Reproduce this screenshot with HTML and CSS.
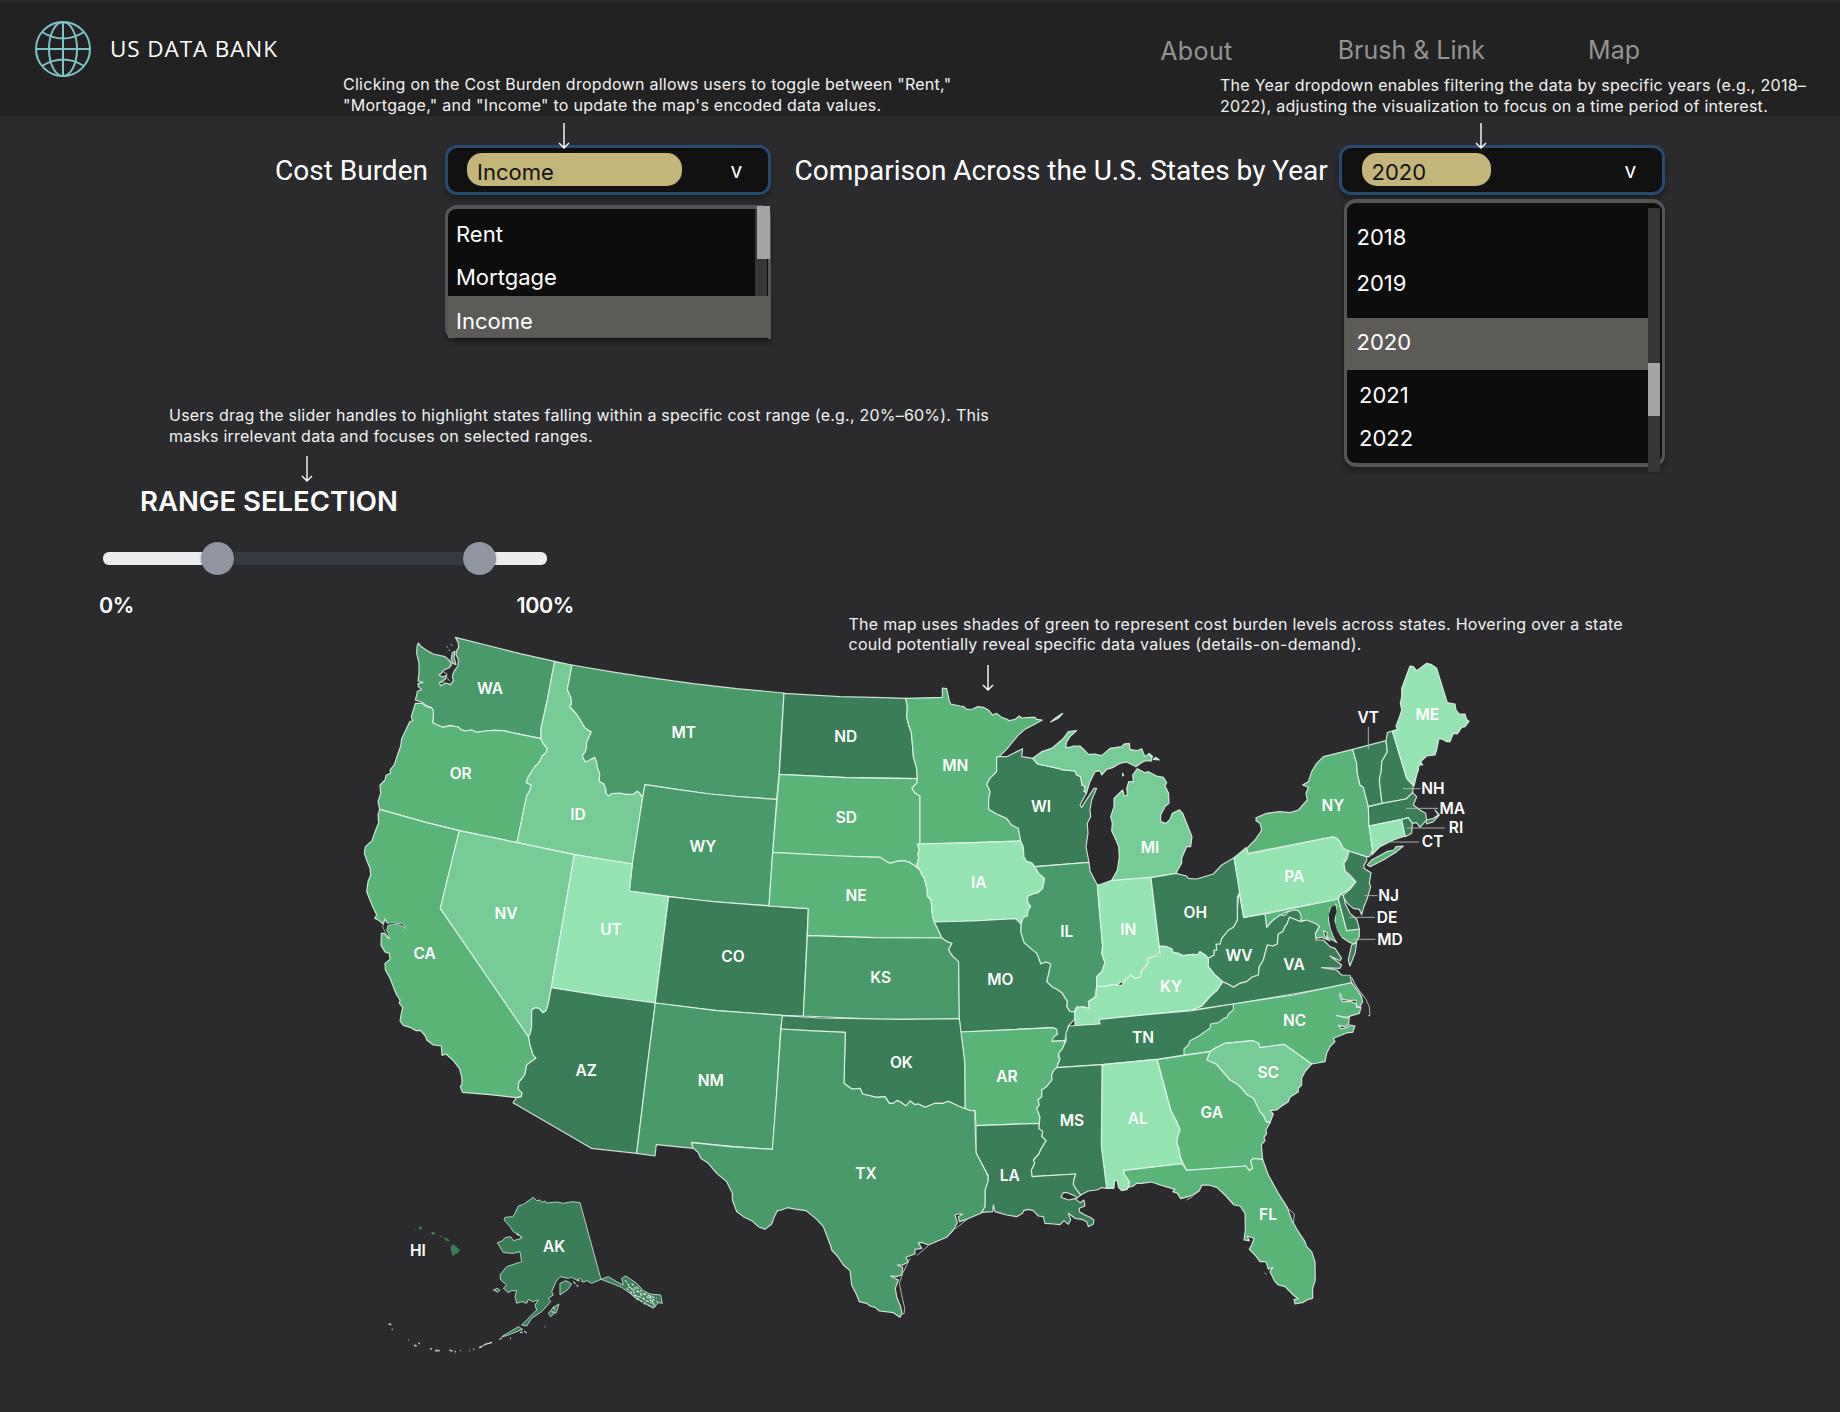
FILE: index.html
```html
<!DOCTYPE html>
<html lang="en">
<head>
<meta charset="utf-8">
<title>US Data Bank</title>
<link rel="stylesheet" href="styles.css">
</head>
<body>
<div class="page">
<header class="topbar">
  <div class="brand">
    <svg class="globe" viewBox="0 0 56 56"><circle cx="28" cy="28" r="27"/><ellipse cx="28" cy="28" rx="14" ry="27"/><path d="M28 1V55M1 28H55M7 11Q28 24 49 11M7 45Q28 32 49 45"/></svg>
    <span class="brand-name">US DATA BANK</span>
  </div>
  <nav class="nav"><a class="nav-about">About</a><a class="nav-brush">Brush &amp; Link</a><a>Map</a></nav>
</header>
<main>
  <section class="controls">
    <span class="label label-cost">Cost Burden</span>
    <div class="select">
      <span class="pill pill-wide">Income</span><span class="caret">v</span>
      <div class="menu menu-cost">
        <div class="opt opt-rent">Rent</div><div class="opt opt-mort">Mortgage</div><div class="opt opt-inc">Income</div>
        <div class="track"></div><div class="thumb"></div>
      </div>
    </div>
    <span class="label label-year">Comparison Across the U.S. States by Year</span>
    <div class="select">
      <span class="pill pill-year">2020</span><span class="caret">v</span>
      <div class="menu menu-year">
        <div class="opt y18">2018</div><div class="opt y19">2019</div><div class="opt y20">2020</div><div class="opt y21">2021</div><div class="opt y22">2022</div>
        <div class="track"></div><div class="thumb"></div>
      </div>
    </div>
  </section>
  <section class="range">
    <p class="note note-range">Users drag the slider handles to highlight states falling within a specific cost range (e.g., 20%–60%). This<br>masks irrelevant data and focuses on selected ranges.</p>
    <svg class="arrow arrow-range" viewBox="0 0 14 26"><path d="M7 0V25M2 20L7 25L12 20"/></svg>
    <h2>RANGE SELECTION</h2>
    <div class="slider"><i class="knob knob-low"></i><i class="knob knob-high"></i></div>
    <div class="limits"><span>0%</span><span>100%</span></div>
  </section>
</main>
<aside class="note note-cost">Clicking on the Cost Burden dropdown allows users to toggle between "Rent,"<br>"Mortgage," and "Income" to update the map's encoded data values.</aside>
<svg class="arrow arrow-cost" viewBox="0 0 14 26"><path d="M7 0V25M2 20L7 25L12 20"/></svg>
<aside class="note note-year">The Year dropdown enables filtering the data by specific years (e.g., 2018–<br>2022), adjusting the visualization to focus on a time period of interest.</aside>
<svg class="arrow arrow-year" viewBox="0 0 14 26"><path d="M7 0V25M2 20L7 25L12 20"/></svg>
<aside class="note note-map">The map uses shades of green to represent cost burden levels across states. Hovering over a state<br>could potentially reveal specific data values (details-on-demand).</aside>
<svg class="arrow arrow-map" viewBox="0 0 14 26"><path d="M7 0V25M2 20L7 25L12 20"/></svg>
<svg class="map" viewBox="340 620 1160 760">
  <g class="states" transform="translate(350 620) scale(.33333)">
    <path class="c2" d="M205 69L214 80 232 92 250 102 285 110 297 120 303 130 298 143 282 150 276 158 267 165 278 171 290 167 286 178 268 188 272 197 288 189 302 194 310 182 307 168 313 152 324 138 325 118 318 104 320 92 326 82 325 70 316 52 420 78 510 101 614 124 606 165 592 240 573 325 573 356 500 341 460 332 430 331 405 333 380 337 365 330 345 333 333 329 325 321 300 317 288 320 278 322 262 315 248 308 250 288 250 272 240 262 228 256 215 246 196 240 200 226 202 214 215 209 205 200 204 191 219 187 204 183 207 160 207 130 200 100 201 80Z"/>
    <path class="c2" d="M307 98L315 94 312 112 318 134 308 130 304 115Z"/><path class="isle" d="M289 79l5 4M302 73l6 3M296 90l5 2"/>
    <path class="isle" d="M280 155l12 8-8 6M290 172l10 12M272 188l12-2M300 120l6 12-4 10"/>
    <path class="c3" d="M196 250L215 250 232 262 244 262 250 272 250 288 248 308 262 315 278 322 288 320 300 317 325 321 333 329 345 333 365 330 380 337 405 333 430 331 460 332 500 341 573 356 580 372 592 386 588 398 577 408 566 430 556 438 548 450 534 472 529 488 544 495 540 510 530 528 501 668 328 632 230 608 89 568 84 545 92 520 90 495 105 480 108 466 122 460 120 450 133 434 140 412 152 378 155 356 170 325 180 304 188 303 184 290 190 270Z"/>
    <path class="c4" d="M614 124L666 135 652 208 664 238 664 254 658 258 682 285 704 322 714 330 724 335 709 370 710 382 706 395 697 408 706 426 718 420 734 412 740 426 742 440 749 462 748 484 762 492 768 508 768 520 776 528 784 521 810 519 830 523 850 523 862 513 868 518 878 533 847 732 673 704 501 668 530 528 540 510 544 495 529 488 534 472 548 450 556 438 566 430 577 408 588 398 592 386 580 372 573 356 573 325 592 240 606 165Z"/>
    <path class="c2" d="M666 135L800 158 900 173 1030 191 1160 206 1302 219 1294 340 1287 463 1280 538 1180 531 1080 522 980 508 885 494 878 533 868 518 862 513 850 523 830 523 810 519 784 521 776 528 768 520 768 508 762 492 748 484 749 462 742 440 740 426 734 412 718 420 706 426 697 408 706 395 710 382 709 370 724 335 714 330 704 322 682 285 658 258 664 254 664 238 652 208Z"/>
    <path class="c2" d="M885 494L980 508 1080 522 1180 531 1280 538 1268 700 1257 857 1050 842 838 813 847 732 878 533Z"/>
  </g>
  <g class="states" transform="translate(350 800) scale(.33333)">
    <path class="c3" d="M89 28L230 68 328 92 271 325 536 711 540 735 545 750 548 762 558 775 540 787 530 795 527 812 524 825 516 835 506 848 505 868 516 878 514 890 500 893 420 884 337 877 331 860 336 852 335 830 328 805 310 782 288 762 276 766 274 738 250 735 230 720 226 708 212 692 198 692 180 682 160 676 150 663 153 645 158 622 148 610 150 600 140 585 132 566 120 535 106 510 105 490 120 478 118 460 105 456 93 436 94 400 103 400 116 416 109 392 107 378 112 370 105 357 99 372 88 362 74 355 80 345 66 315 50 275 54 245 62 225 60 205 51 183 43 160 46 140 66 122 75 95 86 68 84 45Z"/>
    <path class="water" d="M105 360L112 370 128 367 142 371 158 370 166 385 155 376 128 372 114 376 110 390 120 416 108 402 98 380Z"/>
    <path class="c4" d="M328 92L501 128 673 164 604 563 594 615 588 632 578 638 568 626 556 623 545 630 545 680 541 700 536 711 271 325Z"/>
    <path class="c5" d="M673 164L847 192 838 273 956 290 916 609 760 588 604 563Z"/>
    <path class="c1" d="M956 290L1100 306 1257 318 1375 326 1360 648 1298 646 1100 632 916 609Z"/>
    <path class="c1" d="M604 563L760 588 916 609 888 830 860 1060 724 1045 489 908 500 893 514 890 516 878 505 868 506 848 516 835 524 825 527 812 530 795 540 787 558 775 548 762 545 750 540 735 536 711 541 700 545 680 545 630 556 623 568 626 578 638 588 632 594 615Z"/>
    <path class="c2" d="M916 609L1100 632 1298 646 1292 686 1280 880 1268 1048 1150 1040 1025 1027 1030 1045 919 1034 915 1068 860 1060 888 830Z"/>
  </g>
  <g class="states" transform="translate(740 660) scale(.33333)">
    <path class="c1" d="M132 100L300 110 430 113 497 115 502 140 500 170 506 195 514 218 517 250 520 290 530 325 532 356 320 353 118 343Z"/>
    <path class="c3" d="M118 343L320 353 532 356 530 370 516 384 524 398 540 408 540 552 532 552 538 570 534 580 536 595 530 615 540 631 525 618 510 608 492 602 470 604 450 610 436 602 420 592 300 588 98 577Z"/>
    <path class="c3" d="M98 577L300 588 420 592 436 602 450 610 470 604 492 602 510 608 525 618 540 631 546 645 553 655 562 690 562 708 573 720 578 770 583 786 590 800 606 834 400 833 202 827 205 746 87 738Z"/>
    <path class="c2" d="M202 827L400 833 606 834 622 845 636 850 626 868 633 882 640 890 656 905 658 1077 420 1078 190 1068Z"/>
    <path class="c3" d="M497 115L607 112 607 84 620 86 628 122 632 132 660 138 672 140 680 148 698 147 712 140 730 142 745 150 752 158 758 165 770 160 785 172 800 177 808 182 825 178 838 168 845 174 870 172 885 172 890 178 907 180 880 195 855 208 835 225 800 268 778 290 770 292 770 335 750 355 740 374 746 383 750 395 746 420 746 448 770 462 800 475 815 495 835 505 842 543 700 548 540 552 540 408 524 398 516 384 530 370 532 356 530 325 520 290 517 250 514 218 506 195 500 170 502 140Z"/>
    <path class="c5" d="M532 552L700 548 842 543 850 560 852 590 860 604 875 608 885 625 896 640 914 655 908 685 895 698 880 702 864 708 862 724 872 740 864 752 862 768 850 772 843 793 827 776 700 783 583 786 578 770 573 720 562 708 562 690 553 655 546 645 540 631 530 615 536 595 534 580 538 570Z"/>
    <path class="c1" d="M778 290L800 290 848 266 845 290 878 295 893 312 955 325 965 329 1005 333 1010 345 1022 350 1026 375 1036 380 1032 394 1040 398 1020 435 1025 442 1040 418 1062 385 1070 385 1055 420 1050 450 1052 470 1042 490 1044 520 1038 560 1047 607 885 620 875 608 860 604 852 590 850 560 842 543 835 505 815 495 800 475 770 462 746 448 746 420 750 395 746 383 740 374 750 355 770 335 770 292Z"/>
    <path class="c2" d="M885 620L1047 607 1050 632 1072 675 1080 770 1088 860 1085 880 1095 908 1085 935 1070 950 1070 980 1065 1010 1045 1025 1048 1045 1030 1047 1010 1040 1003 1055 990 1055 980 1040 982 1025 965 998 950 988 935 980 920 965 924 948 932 912 918 906 902 912 898 900 890 880 875 868 852 848 842 815 843 793 850 772 862 768 864 752 872 740 862 724 864 708 880 702 895 698 908 685 914 655 896 640Z"/>
    <path class="c1" d="M583 786L700 783 827 776 843 793 842 815 852 848 875 868 890 880 898 900 902 912 918 906 932 912 924 948 920 965 935 980 950 988 965 998 982 1025 980 1040 990 1055 1003 1055 1006 1075 985 1098 975 1142 935 1144 938 1132 952 1122 948 1108 940 1103 662 1116 658 1077 656 905 640 890 633 882 626 868 636 850 622 845 606 834 590 800Z"/>
    <path class="c5" d="M1072 675L1085 672 1115 661 1232 649 1257 858 1262 880 1225 895 1222 912 1205 930 1200 955 1185 957 1172 945 1155 970 1145 965 1125 980 1110 975 1070 985 1070 950 1085 935 1095 908 1085 880 1088 860 1080 770Z"/>
    <path class="c4" d="M878 295L905 275 935 265 965 240 970 235 985 215 1010 212 990 230 980 246 977 262 990 262 1000 258 1020 258 1035 272 1045 283 1065 282 1085 287 1110 265 1145 260 1152 252 1168 250 1170 268 1190 272 1205 266 1215 290 1228 280 1235 292 1235 303 1215 303 1202 310 1188 320 1160 306 1140 310 1120 322 1100 328 1085 345 1080 332 1065 335 1050 365 1040 398 1032 394 1036 380 1026 375 1022 350 1010 345 1005 333 965 329 955 325 893 312Z"/>
    <path class="c4" d="M1115 661L1132 630 1138 590 1136 560 1130 545 1115 512 1117 490 1112 470 1122 440 1122 415 1148 390 1153 408 1162 406 1160 385 1166 365 1180 365 1178 345 1192 326 1215 338 1225 335 1250 348 1270 352 1280 368 1275 378 1286 400 1287 430 1275 440 1262 465 1262 485 1278 490 1290 478 1297 460 1318 449 1328 460 1335 478 1346 505 1356 530 1352 560 1340 560 1325 595 1325 610 1308 640 1232 652Z"/>
    <path class="c4" d="M932 186L945 175 968 160 955 175ZM1240 298l8-6 10 8zM1228 283l8 4 2 5zM1148 340l3 6-3 2z"/>
  </g>
  <g class="states" transform="translate(1040 720) scale(.33333)">
    <path class="c3" d="M675 582L895 537 920 632 958 627 958 650 945 672 930 668 905 652 890 630 884 612 886 590 888 568 888 552 880 562 870 565 868 585 865 600 872 625 880 650 892 668 860 650 862 638 850 632 855 650 870 662 845 652 825 655 826 640 838 620 800 604 783 600 775 585 740 575 700 600 690 610 680 622Z"/>
    <path class="c1" d="M675 582L680 622 690 610 700 600 720 585 735 586 745 575 762 570 775 572 783 585 783 605 748 592 742 610 735 620 728 635 715 642 712 672 700 678 682 675 670 720 658 740 655 765 635 772 620 785 600 790 580 802 565 793 548 785 525 765 505 740 505 715 522 705 522 690 530 690 528 672 540 672 545 655 565 630 580 622 592 600 592 570 597 515 611 592Z"/>
    <path class="c1" d="M783 605L800 600 830 612 838 620 826 640 828 660 850 660 870 680 885 685 905 715 900 722 870 708 905 735 900 745 845 743 890 750 905 765 930 765 935 790 760 822 580 852 455 870 485 858 510 830 530 812 548 785 565 793 580 802 600 790 620 785 635 772 655 765 658 740 670 720 682 675 700 678 712 672 715 642 728 635 735 620 742 610 748 592Z"/>
    <path class="water nostroke" d="M886 555L874 562 866 585 872 625 884 655 900 680 908 705 908 735 902 762 930 765 926 720 934 674 908 658 892 632 882 600 890 575Z"/>
    <path class="c1" d="M950 668L945 700 930 738 925 720 935 675Z"/>
    <path class="c1" d="M333 473L408 460 440 468 445 475 470 477 500 468 520 462 545 435 582 413 600 515 592 530 592 600 580 622 565 630 545 655 540 672 528 672 530 690 522 690 522 705 505 715 495 705 480 695 472 705 460 703 430 707 415 700 400 698 395 686 380 680 358 678Z"/>
    <path class="c5" d="M358 678L380 680 395 686 400 698 415 700 430 707 460 703 472 705 480 695 495 705 505 715 505 740 525 765 548 785 530 812 510 830 485 858 455 870 320 884 180 898 178 912 105 918 104 875 112 862 130 860 148 865 145 845 168 830 170 798 195 800 220 793 245 797 255 780 272 765 285 775 300 772 305 755 322 735 325 715 360 705Z"/>
    <path class="c5" d="M582 413L618 383 625 402 760 375 880 350 890 355 900 365 908 382 925 392 920 410 912 430 915 455 930 470 948 486 925 510 905 522 895 537 750 565 611 592Z"/>
    <path class="c1" d="M895 537L903 522 912 528 915 550 930 580 950 597 958 627 920 632Z"/>
  </g>
  <g class="states" transform="translate(1160 900) scale(.33333)">
    <path class="c3" d="M220 312L400 285 575 248 595 275 604 290 608 305 600 320 590 318 588 300 570 302 548 298 540 280 540 292 548 305 575 305 588 312 590 322 603 322 598 340 575 347 560 352 530 347 556 353 568 352 566 372 556 380 535 376 545 387 562 382 570 375 585 378 578 397 562 398 545 405 520 415 525 425 510 440 500 460 495 485 455 492 372 433 300 443 296 430 278 422 195 430 165 445 150 455 60 467 66 430 120 385 190 322Z"/>
    <path class="line" d="M575 232L580 245 600 275 618 298 628 320 630 347 624 347M575 232L590 262 612 292"/>
    <path class="c4" d="M150 455L165 445 195 430 278 422 296 430 300 443 372 433 455 492 435 515 425 535 425 555 415 565 415 575 390 592 385 605 360 622 350 630 330 632 340 642 330 668 318 665 312 650 300 635 290 615 280 595 262 585 235 555 210 540 168 492 140 480Z"/>
    <path class="c3" d="M-8 478L150 455 140 480 168 492 210 540 235 555 262 585 280 595 290 615 300 635 312 650 318 665 330 668 318 690 320 700 312 712 315 722 304 735 308 778 280 775 272 782 278 805 268 812 258 798 80 811 60 770 58 750 50 730 54 705 60 690 50 665 32 630Z"/>
    <path class="c3" d="M60 790L68 794 80 811 258 798 268 812 278 805 272 782 280 775 308 778 325 825 355 880 382 922 395 960 415 995 435 1025 440 1040 455 1055 465 1085 466 1140 458 1165 458 1195 445 1198 430 1207 405 1212 402 1198 415 1197 400 1185 375 1160 355 1155 345 1145 330 1115 338 1102 325 1108 318 1085 300 1085 285 1065 268 1048 275 1035 282 1015 262 1008 268 1022 252 1020 256 990 255 940 240 918 222 915 195 885 170 862 145 855 125 856 118 872 100 885 85 890 62 896 52 880 38 875 45 868 25 862 0 855 -25 846 -55 850 -70 850 -80 858 -95 862 -92 845 -108 822 -108 812Z"/>
    <path class="line" d="M380 925L390 930 403 942 400 970M80 900L98 890M314 1119l6 4"/>
  </g>
  <g class="states" transform="translate(960 1000) scale(.33333)">
    <path class="c3" d="M2 96L280 83 290 88 292 102 280 112 276 124 316 122 308 145 296 160 294 170 300 178 292 192 294 205 282 210 275 225 276 240 258 262 245 270 246 290 234 300 238 315 230 325 240 350 238 370 48 377 45 332 28 331 15 326 14 185Z"/>
    <path class="c1" d="M326 78L420 72 418 58 560 44 697 32 820 12 820 30 805 42 802 52 790 56 775 68 752 72 750 85 730 98 718 107 690 122 685 135 672 147 672 165 590 178 426 194 290 203 294 192 300 178 296 160 308 145 318 122 318 100Z"/>
    <path class="c5" d="M426 194L590 178 632 330 650 365 660 390 654 405 650 430 658 450 660 470 668 491 492 510 492 522 508 545 502 568 485 572 475 562 472 543 464 541 462 565 440 565 424 440Z"/>
    <path class="c1" d="M290 203L426 194 424 440 440 565 425 563 410 570 385 573 362 585 350 570 340 555 341 540 347 522 216 530 214 510 224 490 220 480 236 462 242 448 258 422 245 410 248 395 236 385 238 370 240 350 230 325 238 315 234 300 246 290 245 270 258 262 276 240 275 225 282 210Z"/>
    <path class="c1" d="M48 377L238 370 236 385 248 395 245 410 258 422 242 448 236 462 220 480 224 490 214 510 216 530 347 522 341 540 340 555 350 570 362 585 350 595 345 588 322 578 310 578 303 592 325 600 345 596 360 608 372 600 375 618 358 625 358 635 375 645 390 652 402 660 400 672 385 680 380 665 365 658 345 655 325 640 332 660 325 673 312 662 300 674 280 672 255 670 250 650 235 648 220 632 205 628 190 632 188 640 170 650 140 645 105 635 100 615 98 635 62 637 75 620 75 570 84 540 84 525 78 515 62 485 48 458Z"/>
  </g>
  <g class="states" transform="translate(680 1000) scale(.33333)">
    <path class="c1" d="M307 47L420 54 660 58 838 56 843 96 854 185 855 326 835 318 805 304 790 310 765 310 735 322 715 312 705 314 690 303 678 318 660 305 650 302 640 310 628 310 615 290 590 292 560 285 548 282 540 265 515 267 492 250 496 97 303 87Z"/>
    <path class="c2" d="M303 87L400 93 496 97 492 250 515 267 540 265 548 282 560 285 590 292 615 290 628 310 640 310 650 302 660 305 678 318 690 303 705 314 715 312 735 322 765 310 790 310 805 304 835 318 855 326 868 331 884 332 888 458 902 485 918 515 924 530 924 545 915 570 915 620 903 640 860 658 838 665 835 650 848 642 835 642 825 645 832 668 820 690 800 712 775 722 745 735 728 728 715 728 725 745 705 748 705 762 678 772 685 785 668 795 652 795 668 802 665 825 650 830 632 828 655 840 646 865 650 890 662 920 666 940 660 952 640 938 598 933 585 922 570 918 560 910 538 905 530 885 515 855 510 812 490 795 475 772 455 750 452 738 430 680 410 658 378 632 350 628 322 623 305 630 292 632 283 650 275 672 255 688 235 680 215 662 190 650 170 635 157 600 157 580 140 545 110 520 85 490 62 475 55 458 38 443 35 428 150 440 277 448 290 280Z"/>
    <path class="line" d="M745 737L710 767M690 775L668 820 658 850 664 880 674 925 672 942 662 942M865 655L825 687"/>
  </g>
  <g class="states" transform="translate(1220 650) scale(.33333)">
    <path class="c1" d="M388 603L440 620 440 632 432 645 432 655 448 665 453 668 448 700 452 710 442 745 430 775 425 795 418 778 400 775 382 760 372 745 370 735 390 718 408 696 390 675 375 662 372 640 382 625Z"/>
    <path class="c3" d="M80 595L105 570 125 540 120 520 108 512 108 503 140 490 180 485 210 488 235 480 262 450 258 430 265 412 248 405 265 395 275 365 290 340 310 320 398 298 410 340 412 370 420 405 430 412 445 470 447 525 458 600 448 620 440 620 388 603 370 595 360 575 350 564 340 560 85 610Z"/>
    <path class="c3" d="M442 645L455 630 500 605 522 600 528 590 550 588 530 605 490 630 450 650Z"/>
    <path class="c1" d="M398 298L498 272 502 305 485 335 484 360 478 390 482 425 486 460 445 470 430 412 420 405 412 370 410 340Z"/>
    <path class="c1" d="M498 272L502 248 517 243 560 385 580 405 578 428 558 447 486 460 482 425 478 390 484 360 485 335 502 305Z"/>
    <path class="c5" d="M517 243L532 238 528 228 537 205 545 180 541 160 545 140 545 115 570 48 580 50 590 62 600 55 620 40 635 44 650 55 682 158 705 162 708 180 718 192 735 192 740 208 747 214 735 230 725 232 712 252 700 250 690 275 680 275 672 270 657 265 650 300 645 315 620 318 602 335 608 345 597 345 595 360 590 375 582 408 560 385Z"/>
    <path class="c1" d="M445 470L486 460 558 447 578 428 590 440 580 465 600 480 617 490 620 510 640 505 655 495 645 480 658 495 640 515 620 522 618 512 600 532 590 518 575 520 565 503 545 508 447 528Z"/>
    <path class="c5" d="M447 528L545 508 556 558 520 570 480 590 455 615 458 600Z"/>
    <path class="c1" d="M545 508L565 503 577 520 575 550 556 560Z"/>
    <path class="leader" d="M445 230V298M548 416H602M558 475H655M560 534H675M480 576H597M433 737H473M388 802H465M398 868H466"/>
  </g>
  <g class="states" transform="translate(360 1170) scale(.33333)">
    <path class="c1 coast" d="M520 82L530 92 540 90 545 97 555 93 560 99 590 96 610 100 635 95 660 98 723 328 695 340 680 332 670 337 662 325 650 330 635 322 625 325 600 320 588 335 575 365 580 375 565 385 572 395 545 425 515 445 500 468 485 465 500 450 530 420 525 405 535 390 518 395 505 388 500 400 485 395 470 400 465 380 470 362 455 362 445 368 430 355 440 345 422 330 420 315 440 290 485 275 480 245 460 250 430 248 412 218 428 212 435 203 452 200 460 212 485 205 478 195 460 185 450 170 432 150 435 142 458 140 465 130 475 108 490 103Z"/>
    <path class="c1 coast" d="M600 340L618 332 635 342 622 360 600 375ZM565 430L580 412 597 402 590 425 572 440ZM400 360l12-5 8 6-6 6zM425 500L455 482 475 470 488 478 465 487 440 497ZM723 328L745 320 770 335 790 345 785 325 797 318 830 340 850 362 870 372 902 375 907 400 895 398 880 415 850 395 830 388 810 370 785 352 750 338Z"/>
    <path class="speck" d="M795 330L835 385M815 340L860 395M830 350L885 405M850 370L890 385M800 355L850 400 880 412M865 380L900 400M805 350L845 372M835 378L875 400M870 378L885 410M810 365L840 392M640 335L655 350M650 330L665 335M480 488l14-4 6 6M358 533l18-10 20-5M418 509l12-8M574 425l16 4M580 410l6 14M470 192l16 10"/>
    <path class="dots" d="M86 461l8 3M95 478h3M145 510h2M162 525l8 4M175 520h5M210 536l6 1M225 542l14 0M268 541l10 2M284 545h4M300 542h2M328 542h2M340 538h3M358 533l10-5M375 524l8-4M388 520l8-3M450 505h3M554 470h2"/>
    <path class="c1 nostroke" d="M274 225L282 224 300 240 292 250 278 257 272 240ZM175 172l8-3 4 6-6 5zM213 187l8-2 6 6-8 4zM237 199l10-1 1 4zM250 204l10 0 10 8-8 2zM162 178l4-1v3z"/>
  </g>
  <g class="names">
    <text x="490" y="693.5">WA</text><text x="460.7" y="778.5">OR</text><text x="578" y="819.5">ID</text><text x="683.7" y="737.5">MT</text><text x="703" y="851.5">WY</text><text x="506" y="919">NV</text><text x="611" y="934.8">UT</text><text x="733" y="962">CO</text><text x="424.7" y="959">CA</text><text x="586.3" y="1076">AZ</text><text x="710.7" y="1086">NM</text><text x="845.7" y="741.7">ND</text><text x="846.3" y="822.7">SD</text><text x="856" y="901">NE</text><text x="880.7" y="982.7">KS</text><text x="955.3" y="771.3">MN</text><text x="978.7" y="888">IA</text><text x="1041" y="812.3">WI</text><text x="1066.7" y="936.7">IL</text><text x="1128.3" y="935">IN</text><text x="1150" y="853">MI</text><text x="1000.3" y="985.3">MO</text><text x="901.3" y="1067.5">OK</text><text x="866" y="1178.7">TX</text><text x="1007" y="1082.3">AR</text><text x="1009.7" y="1181">LA</text><text x="1072" y="1126">MS</text><text x="1137.7" y="1124.3">AL</text><text x="1143" y="1042.5">TN</text><text x="1211.7" y="1118">GA</text><text x="1268.3" y="1077.7">SC</text><text x="1294.7" y="1025.5">NC</text><text x="1268" y="1220">FL</text><text x="1294" y="970">VA</text><text x="1239" y="960.7">WV</text><text x="1195.3" y="917.7">OH</text><text x="1171" y="991.6">KY</text><text x="1294.3" y="881.5">PA</text><text x="1333" y="811">NY</text><text x="1427.3" y="719.5">ME</text><text x="1368.3" y="722.5">VT</text><text x="1433" y="793.7">NH</text><text x="1452.3" y="813.5">MA</text><text x="1456" y="832.7">RI</text><text x="1432.7" y="847">CT</text><text x="1388.7" y="900.7">NJ</text><text x="1387" y="922.5">DE</text><text x="1390" y="944.5">MD</text><text x="418" y="1255.5">HI</text><text x="554" y="1251.5">AK</text>
  </g>
</svg>
</div>
</body>
</html>
```
FILE: styles.css
```css
* { box-sizing: border-box; }
body { margin: 0; background: #2b2b2d; font-family: Inter, "Liberation Sans", sans-serif; color: #fff; }
.page { position: relative; width: 1840px; height: 1412px; overflow: hidden; }
.topbar { display: flex; justify-content: space-between; height: 116px; background: #222; border-top: 2px solid #2b2b2d; padding: 18px 200px 0 35px; }
.brand { display: flex; align-items: center; gap: 19px; height: 57px; }
.globe { width: 56px; height: 56px; fill: none; stroke: #7cc4c8; stroke-width: 2; }
.brand-name { font-family: "Open Sans", sans-serif; font-size: 22.5px; font-weight: 500; letter-spacing: .9px; white-space: nowrap; }
.nav { display: flex; align-items: flex-start; padding-top: 16px; color: #949494; font-size: 25px; line-height: 29px; }
.nav-about { padding-top: 1px; margin-right: 105px; letter-spacing: .4px; }
.nav-brush { margin-right: 103px; }
.controls { display: flex; align-items: center; height: 79px; padding: 29px 0 0 275px; }
.label { font-family: Roboto, sans-serif; font-size: 28px; line-height: 48px; padding-top: 2px; white-space: nowrap; }
.label-cost { width: 169.5px; }
.label-year { width: 544px; margin-left: 24px; }
.select { position: relative; display: flex; align-items: center; width: 326px; height: 50px; border: 3px solid #264a70; border-radius: 12px; background: #111; padding-left: 20px; box-shadow: 0 4px 5px rgba(0,0,0,.3); flex: none; }
.pill { height: 33px; margin-top: -1px; border-radius: 15px; background: #c4b57a; color: #111; font-size: 22px; line-height: 38px; padding-left: 9px; }
.pill-wide { width: 215px; margin-left: -.5px; padding-left: 10px; }
.pill-year { width: 129px; padding-left: 10px; }
.caret { position: absolute; left: 283px; top: 9px; font-size: 21px; line-height: 28px; }
.menu { position: absolute; background: #0d0d0d; border: 4px solid #555; font-size: 22px; box-shadow: 0 4px 5px rgba(0,0,0,.3); }
.menu-cost { left: -3px; top: 57px; width: 326px; height: 134px; border-width: 4px 3px 0 3px; border-radius: 12px 10px 0 10px; padding-top: 8px; }
.opt { padding-left: 8.5px; height: 43px; line-height: 34px; }
.menu-cost .opt-mort { height: 36px; line-height: 35px; }
.menu-cost .opt-inc { background: #5c5b58; margin: 0 -2px 0 0; height: 42px; line-height: 50px; }
.track, .thumb { position: absolute; width: 13px; background: #373535; }
.thumb { background: #a6a5a4; }
.menu-cost .track { left: 307px; top: 0; height: 87px; width: 12px; }
.menu-cost .thumb { left: 309px; top: -3px; height: 53px; }
.menu-year { left: 2px; top: 51px; width: 321px; height: 268px; border-radius: 12px; border-width: 4px 3px; }
.menu-year .opt { height: auto; padding-left: 10px; }
.menu-year .y18 { line-height: 48px; padding-top: 10px; }
.menu-year .y19 { line-height: 45px; height: 57px; }
.menu-year .y20 { line-height: 48px; background: #5c5b58; height: 52px; margin: 0 13px 0 -2px; padding-left: 12px; }
.menu-year .y21 { line-height: 50px; padding-left: 12.5px; }
.menu-year .y22 { line-height: 36px; padding-left: 12.5px; }
.menu-year .track { left: 301px; top: 5px; height: 264px; width: 12px; }
.menu-year .thumb { left: 301px; top: 160px; height: 53px; width: 12px; }
.note { margin: 0; font-size: 16px; line-height: 20.6px; letter-spacing: .27px; color: #f2f2f2; white-space: nowrap; }
.note-cost { position: absolute; left: 343px; top: 74px; }
.note-year { position: absolute; left: 1220px; top: 75px; }
.note-map { position: absolute; left: 848.5px; top: 613.5px; }
.arrow { display: block; width: 14px; height: 26px; fill: none; stroke: #fff; stroke-width: 1.4; }
.arrow-cost { position: absolute; left: 557px; top: 123px; }
.arrow-year { position: absolute; left: 1474px; top: 123px; }
.arrow-map { position: absolute; left: 980.5px; top: 665px; }
.range { padding: 210px 0 0 99px; }
.note-range { padding-left: 70px; letter-spacing: .22px; }
.arrow-range { margin: 10px 0 0 201px; }
.range h2 { margin: 2px 0 0 41px; font-size: 27.5px; line-height: 34px; font-weight: 600; white-space: nowrap; }
.slider { position: relative; width: 444px; height: 13px; margin: 34px 0 0 4px; border-radius: 6px; background: linear-gradient(90deg, #ecedf0 115px, #373941 115px, #373941 376px, #ecedf0 376px); }
.knob { position: absolute; top: -10px; width: 33px; height: 33px; border-radius: 50%; background: #9095a1; box-shadow: 0 0 2px rgba(0,0,0,.4); }
.knob-low { left: 98px; }
.knob-high { left: 360px; }
.limits { display: flex; justify-content: space-between; width: 475px; margin-top: 26px; font-size: 21.5px; line-height: 28px; font-weight: 600; letter-spacing: -.4px; }
.map { position: absolute; left: 340px; top: 620px; width: 1160px; height: 760px; }
.states path { stroke: rgba(236,248,241,.85); stroke-width: 1.15; stroke-linejoin: round; vector-effect: non-scaling-stroke; }
.states .c1 { fill: #3a7d57; }
.states .c2 { fill: #4a9968; }
.states .c3 { fill: #5ab478; }
.states .c4 { fill: #77cc95; }
.states .c5 { fill: #95e4b1; }
.states .water { fill: #2b2b2d; stroke-width: .7; }
.states .line, .states .leader, .states .isle, .states .speck, .states .dots { fill: none; stroke-width: .9; stroke: #b9c6bf; }
.states .speck { stroke-dasharray: 3 1.5; stroke: #d8e6de; stroke-width: 1.1; }
.states .dots { stroke-width: 1.6; stroke: #b9c0bd; }
.states .leader { stroke: #aebdb5; }
.states .coast { stroke-width: 1; stroke: #b4d0c0; }
.states .nostroke { stroke: none; }
.names { fill: #fff; font-size: 15.5px; font-weight: 600; text-anchor: middle; }
```
